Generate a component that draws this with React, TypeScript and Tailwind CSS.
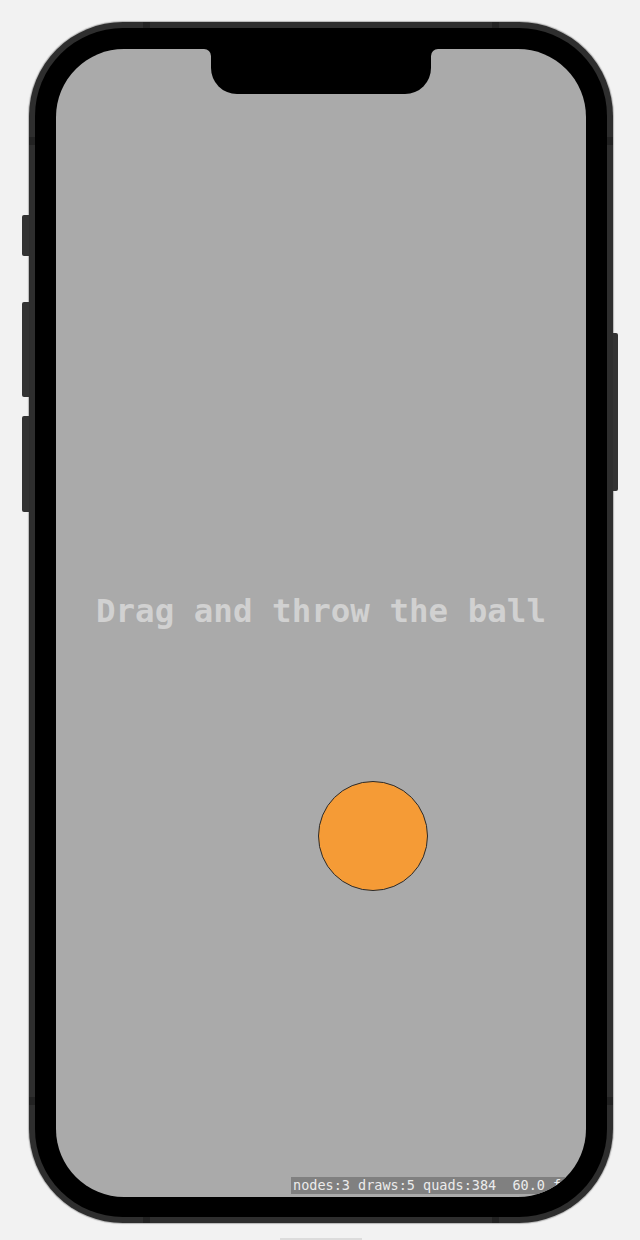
import React from 'react'

const mono = { fontFamily: '"DejaVu Sans Mono", "Liberation Mono", monospace' }

function SideButtons() {
  return (
    <>
      <div className="absolute left-[-7px] top-[193px] h-[41px] w-[7px] rounded-l-[2px] bg-[#333]" />
      <div className="absolute left-[-7px] top-[280px] h-[95px] w-[7px] rounded-l-[2px] bg-[#333]" />
      <div className="absolute left-[-7px] top-[394px] h-[96px] w-[7px] rounded-l-[2px] bg-[#333]" />
      <div className="absolute right-[-5px] top-[311px] h-[158px] w-[5px] rounded-r-[2px] bg-[#333]" />
      {/* antenna bands */}
      <div className="absolute top-0 left-[114px] h-[6px] w-[7px] bg-[#222]" />
      <div className="absolute top-0 right-[114px] h-[6px] w-[7px] bg-[#222]" />
      <div className="absolute bottom-0 left-[114px] h-[6px] w-[7px] bg-[#222]" />
      <div className="absolute bottom-0 right-[114px] h-[6px] w-[7px] bg-[#222]" />
      <div className="absolute left-0 top-[115px] h-[8px] w-[6px] bg-[#222]" />
      <div className="absolute right-0 top-[115px] h-[8px] w-[6px] bg-[#222]" />
      <div className="absolute left-0 bottom-[118px] h-[8px] w-[6px] bg-[#222]" />
      <div className="absolute right-0 bottom-[118px] h-[8px] w-[6px] bg-[#222]" />
    </>
  )
}

function Notch() {
  return (
    <div className="absolute left-1/2 top-0 flex -translate-x-1/2">
      <div className="h-[8px] w-[7px] bg-black">
        <div className="h-full w-full rounded-tr-[7px] bg-[#aaaaaa]" />
      </div>
      <div className="h-[45px] w-[220px] rounded-b-[26px] bg-black" />
      <div className="h-[8px] w-[7px] bg-black">
        <div className="h-full w-full rounded-tl-[7px] bg-[#aaaaaa]" />
      </div>
    </div>
  )
}

export default function App() {
  return (
    <div className="h-[1240px] w-[640px] overflow-hidden bg-[#f2f2f2] pl-[29px] pt-[22px]">
      <div className="relative h-[1201px] w-[584px] rounded-[94px] bg-[#2e2e2e] p-[6px] shadow-[0_0_1px_1px_rgba(0,0,0,0.25)]">
        <SideButtons />
        <div className="h-full w-full rounded-[88px] bg-black px-[21px] pb-[20px] pt-[21px]">
          <div className="relative flex h-full w-full flex-col items-center overflow-hidden rounded-[68px] bg-[#aaaaaa]">
            <Notch />
            <p
              className="pt-[542px] text-[32.5px] font-bold leading-[40px] text-[#d1d1d1] whitespace-pre"
              style={mono}
            >
              Drag and throw the ball
            </p>
            {/* ball sits on a free canvas */}
            <div className="absolute left-[262px] top-[732px] h-[110px] w-[110px] rounded-full border border-[#2a2a2a] bg-[#f59b36]" />
            <div
              className="absolute bottom-[3px] left-[235px] h-[17px] bg-[#808080] pl-[2px] pr-[4px] text-[13.5px] leading-[17px] text-[#ececec] whitespace-pre"
              style={mono}
            >
              nodes:3 draws:5 quads:384  60.0 fps
            </div>
          </div>
        </div>
      </div>
      <div className="ml-[251px] mt-[15px] h-[2px] w-[82px] bg-[#dcdcdc]" />
    </div>
  )
}
